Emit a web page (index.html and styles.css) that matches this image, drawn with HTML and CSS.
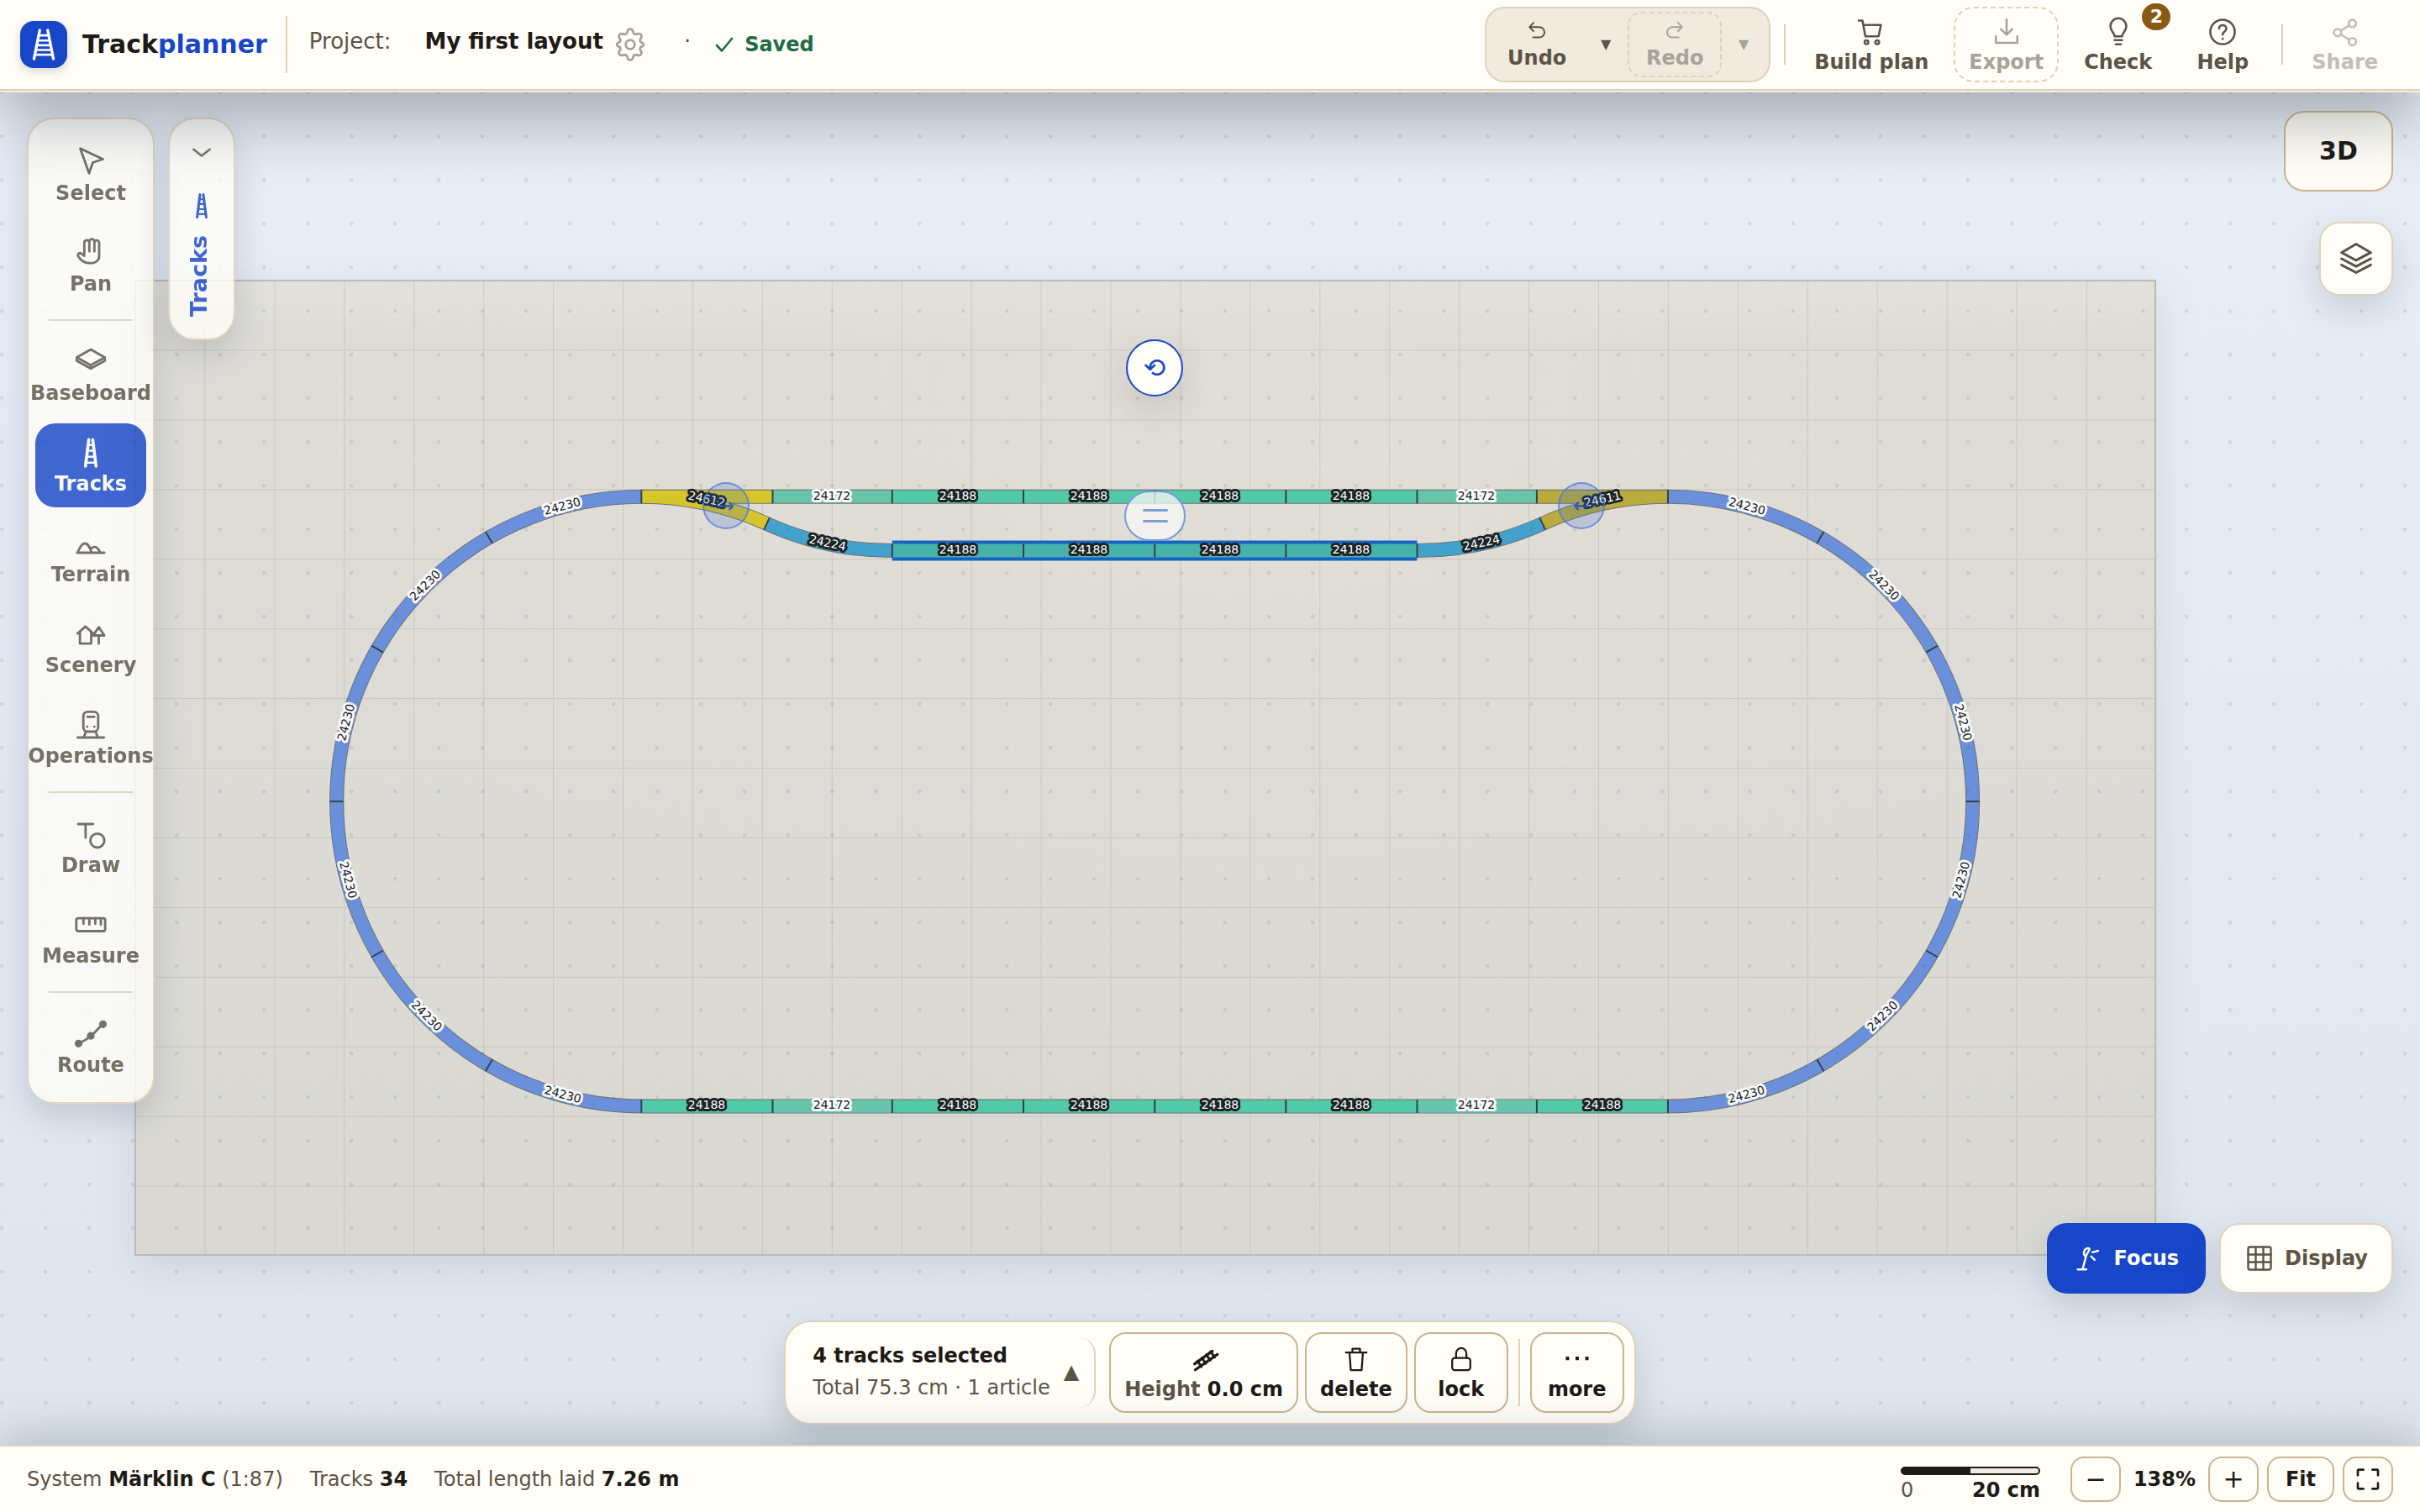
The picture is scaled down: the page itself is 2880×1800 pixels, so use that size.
FILE: index.html
```html
<!DOCTYPE html>
<html lang="en">
<head>
<meta charset="utf-8">
<title>Trackplanner – My first layout</title>
<link rel="stylesheet" href="styles.css">
</head>
<body>
<svg class="sprite" aria-hidden="true">
  <symbol id="i-ladder" viewBox="0 0 24 24"><path d="M10.600 2.600 8.200 21.600M13.400 2.600l2.400 19" stroke-width="2.200"/><path d="M10 6.500h4M9.600 10.500h4.800M9 14.800h6M8.500 19h7" stroke-width="1.500"/></symbol>
  <symbol id="i-logo" viewBox="0 0 24 24"><path d="M9.300 2.200 5.400 21.800M14.700 2.200l3.900 19.600" stroke-width="1.900"/><path d="M8.500 5.800h7M7.900 9.300h8.200M7.300 12.500h9.400M6.800 15.700h10.400M6.200 18.900h11.600" stroke-width="1.500"/></symbol>
</svg>

<header class="topbar">
  <a class="brand" href="#">
    <span class="brand-mark"><svg class="icon brand-icon"><use href="#i-logo"/></svg></span>
    <span>Track<b>planner</b></span>
  </a>
  <span class="brand-rule"></span>
  <div class="project">
    <span class="project-label">Project:</span>
    <span class="project-name">My first layout</span>
    <button class="plain gear" aria-label="Project settings"><svg class="icon" width="44" height="44" viewBox="0 0 24 24" stroke-width="1.500"><path d="M10.300 3.200c.5-1.600 2.900-1.600 3.400 0 .3 2 1.600 2.700 3.200 1.900 1.700-.7 3 1.100 2.200 2.500-1.100 1.500-1 2.600.5 3.100 1.500.8 1.500 1.800 0 2.600-1.500.5-1.600 1.600-.5 3.100.8 1.400-.5 3.200-2.200 2.500-1.600-.8-2.900-.1-3.200 1.900-.5 1.600-2.900 1.600-3.400 0-.3-2-1.600-2.700-3.200-1.900-1.700.7-3-1.100-2.200-2.500 1.100-1.500 1-2.600-.5-3.100-1.500-.8-1.500-1.800 0-2.600 1.500-.5 1.600-1.600.5-3.100-.8-1.400.5-3.200 2.200-2.500 1.600.8 2.900.1 3.200-1.900z"/><circle cx="12" cy="12" r="2.900"/></svg></button>
    <span class="dot-sep">·</span>
    <span class="saved"><svg class="icon" width="24" height="24" viewBox="0 0 24 24" stroke-width="2.600"><path d="m3 13 6 6.500L21 5"/></svg>Saved</span>
  </div>

  <div class="actions">
    <div class="history">
      <button class="tool small"><svg class="icon" width="28" height="28" viewBox="0 0 24 24" stroke-width="1.900"><path d="M8.500 3.500 4.500 8l4 4M4.500 8h10a5 5 0 0 1 0 10.500H8"/></svg>Undo</button>
      <button class="plain caret" aria-label="Undo steps">▼</button>
      <button class="tool small off dashed" disabled><svg class="icon" width="28" height="28" viewBox="0 0 24 24" stroke-width="1.900"><path d="m15.500 3.500 4 4.500-4 4M19.500 8h-10a5 5 0 0 0 0 10.500H16"/></svg>Redo</button>
      <button class="plain caret off" aria-label="Redo steps" disabled>▼</button>
    </div>
    <span class="rule"></span>
    <button class="tool"><svg class="icon" viewBox="0 0 24 24"><path d="M2 3h3l2.300 12.500h10.400l2-9H5.700"/><circle cx="8.200" cy="20.200" r="1.500"/><circle cx="16.700" cy="20.200" r="1.500"/></svg>Build plan</button>
    <button class="tool off dashed" disabled><svg class="icon" viewBox="0 0 24 24"><path d="M12 2v12M7.500 9.700 12 14.200l4.500-4.500M3.500 15.500v5.200h17v-5.200"/></svg>Export</button>
    <button class="tool"><svg class="icon" viewBox="0 0 24 24"><path d="M9 15.500c0-2.600-3.300-4-3.300-8a6.300 6.300 0 0 1 12.600 0c0 4-3.300 5.400-3.300 8zM9 18.500h6M10 21.800h4"/></svg>Check<span class="badge">2</span></button>
    <button class="tool"><svg class="icon" viewBox="0 0 24 24"><circle cx="12" cy="12" r="9.700"/><path d="M9.200 9.300c0-3.600 5.800-3.500 5.800 0 0 2.200-2.900 2.500-2.900 4.900M12.100 17.300v.3"/></svg>Help</button>
    <span class="rule"></span>
    <button class="tool faint" disabled><svg class="icon" viewBox="0 0 24 24"><circle cx="17.700" cy="5.300" r="2.900"/><circle cx="6" cy="12.500" r="2.900"/><circle cx="17.700" cy="19.700" r="2.900"/><path d="m8.500 11 6.700-4.200M8.500 14l6.700 4.200"/></svg>Share</button>
  </div>
</header>

<main class="stage">
  <div class="canvas">
    <svg class="plan" width="100%" height="100%">
      <defs>
        <linearGradient id="wood" x1="0" y1="0" x2="0" y2="1"><stop offset="0" stop-color="#e3e2da"/><stop offset=".05" stop-color="#dedcd7"/><stop offset=".5" stop-color="#dddbd6"/><stop offset="1" stop-color="#d9d8d2"/></linearGradient>
        <radialGradient id="glow" cx=".55" cy=".2" r=".5"><stop offset="0" stop-color="#e4dfd6" stop-opacity=".5"/><stop offset="1" stop-color="#e4dfd6" stop-opacity="0"/></radialGradient>
        <pattern id="grid" x="160.500" y="333.500" width="82.930" height="82.930" patternUnits="userSpaceOnUse"><path d="M0 .5h82.930M.5 0v82.930" stroke="#403c30" stroke-opacity=".13" fill="none"/></pattern>
        <path id="joint-top" d="M763.300 583.300v16"/>
        <path id="joint-right" d="M1985 583.300v16"/>
        <path id="joint" d="M0-8V8"/>
      </defs>
      <g transform="translate(0 -108)">
        <rect class="board" x="161" y="334" width="2404" height="1160" fill="url(#wood)"/>
        <rect x="161" y="334" width="2404" height="1160" fill="url(#glow)"/>
        <rect x="161" y="334" width="2404" height="1160" fill="url(#grid)" stroke="#bdbbb1" stroke-width="2"/>

        <g class="edge">
          <path d="M763.300 591.300A362.800 362.800 0 0 0 763.300 1316.900H1985A362.800 362.800 0 0 0 1985 591.300H763.300"/>
          <path d="M763.300 591.300A362.800 362.800 0 0 1 912.600 623.400A362.800 362.800 0 0 0 1061.800 655.600H1686.500A362.800 362.800 0 0 0 1835.700 623.400A362.800 362.800 0 0 1 1985 591.300"/>
        </g>
        <g class="bed">
          <path class="t-curve" d="M763.300 591.300A362.800 362.800 0 0 0 763.300 1316.900"/>
          <path class="t-curve" d="M1985 591.300A362.800 362.800 0 0 1 1985 1316.900"/>
          <path class="t-188" d="M763.300 1316.900H1985M1061.800 591.300H1686.500"/>
          <path class="t-172" d="M919.500 1316.900H1061.800M1686.500 1316.900H1828.900M919.500 591.300H1061.800M1686.500 591.300H1828.900"/>
          <path class="t-left" d="M763.300 591.300H919.500M763.300 591.300A362.800 362.800 0 0 1 912.600 623.400"/>
          <path class="t-right" d="M1985 591.300H1828.900M1985 591.300A362.800 362.800 0 0 0 1835.700 623.400"/>
          <path class="t-224" d="M912.600 623.400A362.800 362.800 0 0 0 1061.800 655.600M1686.500 655.600A362.800 362.800 0 0 0 1835.700 623.400"/>
          <path class="t-halo" d="M1061.800 655.600H1686.500"/>
          <path class="t-sel" d="M1061.800 655.600H1686.500"/>
        </g>
        <g class="joints">
          <use href="#joint-top"/><use href="#joint-top" transform="rotate(-30 763.300 954.100)"/><use href="#joint-top" transform="rotate(-60 763.300 954.100)"/><use href="#joint-top" transform="rotate(-90 763.300 954.100)"/><use href="#joint-top" transform="rotate(-120 763.300 954.100)"/><use href="#joint-top" transform="rotate(-150 763.300 954.100)"/><use href="#joint-top" transform="rotate(-180 763.300 954.100)"/>
          <use href="#joint-right"/><use href="#joint-right" transform="rotate(30 1985 954.100)"/><use href="#joint-right" transform="rotate(60 1985 954.100)"/><use href="#joint-right" transform="rotate(90 1985 954.100)"/><use href="#joint-right" transform="rotate(120 1985 954.100)"/><use href="#joint-right" transform="rotate(150 1985 954.100)"/><use href="#joint-right" transform="rotate(180 1985 954.100)"/>
          <path d="M919.500 583.300v16M1061.800 583.300v16M1218 583.300v16M1374.200 583.300v16M1530.300 583.300v16M1686.500 583.300v16M1828.900 583.300v16"/>
          <path d="M919.500 1308.900v16M1061.800 1308.900v16M1218 1308.900v16M1374.200 1308.900v16M1530.300 1308.900v16M1686.500 1308.900v16M1828.900 1308.900v16"/>
          <path d="M1061.800 647.600v16M1218 647.600v16M1374.200 647.600v16M1530.300 647.600v16M1686.500 647.600v16"/>
          <use href="#joint" transform="translate(912.600 623.400) rotate(24.300)"/><use href="#joint" transform="translate(1835.700 623.400) rotate(-24.300)"/>
        </g>

        <g class="label">
          <text x="763.300" y="595" transform="rotate(-15 763.300 954.100)">24230</text>
          <text x="763.300" y="595" transform="rotate(-45 763.300 954.100)">24230</text>
          <text x="763.300" y="595" transform="rotate(-75 763.300 954.100)">24230</text>
          <text x="763.300" y="1320" transform="rotate(75 763.300 954.100)">24230</text>
          <text x="763.300" y="1320" transform="rotate(45 763.300 954.100)">24230</text>
          <text x="763.300" y="1320" transform="rotate(15 763.300 954.100)">24230</text>
          <text x="1985" y="595" transform="rotate(15 1985 954.100)">24230</text>
          <text x="1985" y="595" transform="rotate(45 1985 954.100)">24230</text>
          <text x="1985" y="595" transform="rotate(75 1985 954.100)">24230</text>
          <text x="1985" y="1320" transform="rotate(-75 1985 954.100)">24230</text>
          <text x="1985" y="1320" transform="rotate(-45 1985 954.100)">24230</text>
          <text x="1985" y="1320" transform="rotate(-15 1985 954.100)">24230</text>
          <text x="990" y="595">24172</text><text x="1757" y="595">24172</text>
          <text x="990" y="1320">24172</text><text x="1757" y="1320">24172</text>
        </g>
        <g class="label dark">
          <text x="1140" y="595">24188</text><text x="1296" y="595">24188</text><text x="1452" y="595">24188</text><text x="1608" y="595">24188</text>
          <text x="1140" y="659">24188</text><text x="1296" y="659">24188</text><text x="1452" y="659">24188</text><text x="1608" y="659">24188</text>
          <text x="841" y="1320">24188</text><text x="1140" y="1320">24188</text><text x="1296" y="1320">24188</text><text x="1452" y="1320">24188</text><text x="1608" y="1320">24188</text><text x="1907" y="1320">24188</text>
          <text y="5" transform="translate(841 594) rotate(12)">24612</text>
          <text y="5" transform="translate(1907 594) rotate(-12)">24611</text>
          <text y="5" transform="translate(985 646) rotate(12)">24224</text>
          <text y="5" transform="translate(1763 646) rotate(-12)">24224</text>
        </g>
      </g>
    </svg>
    <div class="dots"></div>
    <button class="node port port-left" aria-label="Turnout 24612">→</button>
    <button class="node port port-right" aria-label="Turnout 24611">←</button>
    <button class="node grip" aria-label="Move selection"><i></i><i></i></button>
    <button class="node spin" aria-label="Rotate selection">⟲</button>
  </div>

  <div class="overlay">
    <div class="side left">
      <nav class="panel tools" aria-label="Tools">
        <button><svg class="icon" viewBox="0 0 24 24"><path d="M4.500 2.300 20.700 9.900l-7.200 2.400L10.800 20z"/></svg>Select</button>
        <button><svg class="icon" viewBox="0 0 24 24"><path d="M7.400 12.800V4.700a1.800 1.800 0 0 1 3.600 0V11M11 4.500V4a1.800 1.800 0 0 1 3.600 0v7M14.600 4.800a1.700 1.700 0 0 1 3.400 0v9.400c0 3.200-2.600 5.200-6 5.200-4.200 0-7-1.700-8.900-4.900-.9-1.700.9-3 2.300-1.900l2 1.600"/></svg>Pan</button>
        <hr>
        <button><svg class="icon" viewBox="0 0 24 24"><path d="M12 3 22 8.700 12 14.200 2 8.700zM2 8.700v2.400l10 5.500 10-5.500V8.700M12 14.200v2.400"/></svg>Baseboard</button>
        <button class="on"><svg class="icon"><use href="#i-ladder"/></svg>Tracks</button>
        <button><svg class="icon" viewBox="0 0 24 24"><path d="M2.300 18.600h19.400M2.500 18.600C4.500 14.500 5.500 12 7.800 12s3.400 2.600 4.700 5.900M11.700 16c1-1 2-1.600 3.200-1.500 1.900 0 2.700 2 4 4.100"/></svg>Terrain</button>
        <button><svg class="icon" viewBox="0 0 24 24"><path d="M2.600 11.500 8.200 6.500l5.600 5M4.300 10.500v8.200h8v-8.200M17.700 7l-4 5.900h8zM17.700 13v5.700"/></svg>Scenery</button>
        <button><svg class="icon" viewBox="0 0 24 24"><rect x="6.700" y="2.600" width="10.600" height="14.200" rx="3"/><path d="M9.500 6.200h5M9.400 13.300h.1M14.500 13.300h.1M8.500 17 7 20.800M15.500 17l1.500 3.800M2.600 21h18.800"/></svg>Operations</button>
        <hr>
        <button><svg class="icon" viewBox="0 0 24 24"><path d="M3 4.800h10.600M8.300 4.800v9.700"/><circle cx="16.700" cy="16.600" r="5"/></svg>Draw</button>
        <button><svg class="icon" viewBox="0 0 24 24"><rect x="1.700" y="7.300" width="20.600" height="9.200" rx="1.500"/><path d="M6.800 7.300v4M11 7.300v4.500M15.200 7.300v4M19.200 7.300v4.500"/></svg>Measure</button>
        <hr>
        <button><svg class="icon" viewBox="0 0 24 24"><path d="M3.200 18.800c3.500-1.500 6-3 8.800-5.300 3.500-2.800 5-5.500 8.500-8.500"/><g fill="currentColor"><circle cx="3.300" cy="18.800" r="1.900"/><circle cx="12" cy="13.300" r="1.900"/><circle cx="20.700" cy="5" r="1.900"/></g></svg>Route</button>
      </nav>
      <button class="panel drawer"><svg class="icon" width="36" height="36" viewBox="0 0 24 24"><path d="m5.500 9.200 6.500 5.200 6.500-5.200"/></svg><svg class="icon blue" width="34" height="34"><use href="#i-ladder"/></svg><span>Tracks</span></button>
    </div>

    <div class="selection">
      <button class="summary"><span class="summary-text"><strong>4 tracks selected</strong><span>Total 75.3 cm · 1 article</span></span><span class="up">▲</span></button>
      <button class="act"><svg class="icon" viewBox="0 0 24 24"><path d="M5 20.500 22.500 8.300M4.500 15.800l14-10.200" stroke-width="2.200"/><path d="m6.800 13.500 3 4.500M10.300 11l3 4.500M13.800 8.500l3 4.500M17.300 6l3 4.500" stroke-width="2"/></svg><span><em>Height</em> 0.0 cm</span></button>
      <button class="act"><svg class="icon" viewBox="0 0 24 24"><path d="M3.800 6.800h16.400M9 6.500V3.700h6v2.800M6.700 7l1 13.800h8.600l1-13.800"/></svg>delete</button>
      <button class="act"><svg class="icon" viewBox="0 0 24 24"><rect x="4.800" y="11" width="14.400" height="9.800" rx="2.200"/><path d="M7.900 11V7.400a4.100 4.100 0 0 1 8.200 0V11"/></svg>lock</button>
      <span class="rule tall"></span>
      <button class="act"><svg class="icon" viewBox="0 0 24 24"><path d="M3 10h2.600v2.800H3zM10.700 10h2.600v2.800h-2.600zM18.400 10H21v2.800h-2.600z" fill="currentColor" stroke="none"/></svg>more</button>
    </div>

    <div class="side right">
      <button class="card view3d">3D</button>
      <button class="card layers" aria-label="Layers"><svg class="icon" width="44" height="44" viewBox="0 0 24 24" stroke-width="1.700"><path d="M12 2.500 21.500 8 12 13 2.500 8zM2.500 12l9.500 5 9.500-5M2.500 16l9.500 5 9.500-5"/></svg></button>
      <div class="modes">
        <button class="card focus"><svg class="icon" viewBox="0 0 24 24"><path d="M3 20.800h7M7 20.500l2.600-9.700M9.300 10.700C6.800 8.500 8.200 4.200 11.300 4c2.800.2-.2 2.600-1.900 6.700M14.700 7.200l4.600-1.200M13.800 10.500l2.700 2.700"/></svg>Focus</button>
        <button class="card"><svg class="icon" viewBox="0 0 24 24"><rect x="3" y="3" width="18" height="18" rx="1.500"/><path d="M9 3v18M15 3v18M3 9h18M3 15h18"/></svg>Display</button>
      </div>
    </div>
  </div>
</main>

<footer class="status">
  <span>System <b>Märklin C</b> (1:87)</span>
  <span>Tracks <b>34</b></span>
  <span>Total length laid <b>7.26 m</b></span>
  <div class="zoom">
    <div class="scale"><div class="scale-bar"></div><div class="scale-text"><span>0</span><b>20 cm</b></div></div>
    <button class="key sign" aria-label="Zoom out">−</button>
    <b class="percent">138%</b>
    <button class="key sign" aria-label="Zoom in">+</button>
    <button class="key fit">Fit</button>
    <button class="key" aria-label="Full screen"><svg class="icon" width="32" height="32" viewBox="0 0 24 24" stroke-width="2"><path d="M3 8.500V4.500a1 1 0 0 1 1-1h4M16 3.500h4a1 1 0 0 1 1 1v4M21 15.500v4a1 1 0 0 1-1 1h-4M8 20.500H4a1 1 0 0 1-1-1v-4"/></svg></button>
  </div>
</footer>
</body>
</html>
```
FILE: styles.css
```css
:root {
  --paper: #fffdf7;
  --ink: #1d1b16;
  --soft: #5b5446;
  --line: #e0d2b8;
  --line-strong: #c9b58f;
  --blue: #1746c8;
  --radius: 24px;
}

* { box-sizing: border-box; }

body {
  margin: 0;
  height: 100vh;
  display: flex;
  flex-direction: column;
  overflow: hidden;
  font: 24px/28px "DejaVu Sans", Verdana, sans-serif;
  color: var(--soft);
  background: var(--paper);
}

button {
  font: inherit;
  font-weight: 700;
  color: inherit;
  padding: 0;
  border: 0;
  background: none;
}

.sprite { position: absolute; width: 0; height: 0; }

.icon {
  display: block;
  flex: none;
  fill: none;
  stroke: currentColor;
  stroke-linecap: round;
  stroke-linejoin: round;
}

/* Top bar */
.topbar {
  position: relative;
  z-index: 2;
  height: 108px;
  flex: none;
  display: flex;
  align-items: center;
  padding: 0 32px 0 24px;
  background: var(--paper);
  border-bottom: 2px solid var(--line);
  box-shadow: 0 2px 0 #f5efe2, 0 36px 72px rgba(50, 60, 70, .36);
}

.brand {
  display: flex;
  align-items: center;
  gap: 18px;
  font-size: 30px;
  font-weight: 700;
  color: var(--ink);
  text-decoration: none;
}
.brand b { color: var(--blue); }
.brand-mark {
  width: 56px;
  height: 56px;
  display: grid;
  place-items: center;
  border-radius: 16px;
  color: #fff;
  background: var(--blue);
  box-shadow: 0 4px 12px rgba(50, 60, 70, .2);
}
.brand-icon { width: 42px; height: 42px; }
.brand-rule { width: 2px; height: 68px; margin: 0 26px 0 22px; background: var(--line); }

.project { display: flex; align-items: center; font-size: 26px; padding-bottom: 8px; }
.project-name { margin-left: 40px; font-weight: 700; color: var(--ink); }
.gear { margin: 8px 0 0 10px; color: #a5a198; }
.dot-sep { margin-left: 42px; }
.saved {
  display: flex;
  align-items: center;
  gap: 12px;
  margin: 8px 0 0 28px;
  font-size: 24px;
  font-weight: 700;
  color: #1f6b45;
}

.actions { margin-left: auto; display: flex; align-items: center; gap: 12px; }
.history {
  display: flex;
  align-items: center;
  height: 90px;
  padding: 4px;
  border: 2px solid var(--line);
  border-radius: var(--radius);
  background: #f3eadf;
}
.rule { width: 2px; height: 48px; margin: 0 4px; background: var(--line); }

.tool {
  position: relative;
  display: flex;
  flex-direction: column;
  align-items: center;
  justify-content: center;
  gap: 4px;
  height: 90px;
  min-width: 108px;
  padding: 2px 16px 0;
  border: 2px solid transparent;
  border-radius: var(--radius);
}
.tool .icon { width: 36px; height: 36px; stroke-width: 1.7px; }
.tool.small { width: 112px; height: 78px; padding: 0; border-radius: 16px; }
.tool.small .icon { width: 28px; height: 28px; }
.caret { width: 52px; font-size: 16px; }
.dashed { border: 2px dashed #e0d2b2; }
.off { color: #a8a398; }
.faint { color: #c2beb5; }
.badge {
  position: absolute;
  right: -6px;
  top: -6px;
  width: 34px;
  height: 32px;
  border-radius: 17px;
  font-size: 22px;
  line-height: 32px;
  color: #fff;
  background: #8a5a14;
}

/* Plan canvas */
.stage {
  position: relative;
  flex: 1;
  min-height: 0;
  background: linear-gradient(#e8edf6, #e3e8f2 70%, #dfe6ee);
}
.canvas, .plan, .dots { position: absolute; inset: 0; }
.canvas { overflow: hidden; }
.dots {
  background: radial-gradient(circle at 2px 2px, rgba(70, 80, 90, .12) 2px, transparent 3px) 0 0 / 52px 52px;
  pointer-events: none;
}
.board { filter: drop-shadow(0 16px 24px rgba(60, 70, 80, .12)); }

.edge { fill: none; stroke: #6d7370; stroke-width: 17px; }
.bed { fill: none; stroke-width: 15px; }
.t-curve { stroke: #6a8fdb; }
.t-188 { stroke: #52c9a8; }
.t-172 { stroke: #68c5ac; }
.t-left { stroke: #d6c62a; }
.t-right { stroke: #b9ab3c; }
.t-224 { stroke: #42a2cb; }
.t-halo { stroke: #1763c4; stroke-width: 24px; }
.t-sel { stroke: #46b3aa; stroke-width: 16px; }
.joints { stroke: #33414a; stroke-width: 2px; }

.label {
  font-size: 14px;
  text-anchor: middle;
  fill: #16181a;
  stroke: #f8f9fa;
  stroke-width: 6px;
  stroke-linejoin: round;
  paint-order: stroke;
}
.label.dark { fill: #fff; stroke: #1c2426; }

.node {
  position: absolute;
  display: grid;
  place-content: center;
  border-radius: 34px;
  font-weight: 400;
}
.port {
  top: 466px;
  width: 56px;
  height: 56px;
  font-size: 24px;
  font-weight: 700;
  color: rgba(23, 70, 200, .75);
  border: 2px solid rgba(70, 120, 225, .7);
  background: rgba(70, 110, 200, .22);
}
.port-left { left: 836px; }
.port-right { left: 1854px; }
.grip {
  left: 1338px;
  top: 476px;
  width: 73px;
  height: 60px;
  gap: 10px;
  border: 2px solid #749ae0;
  background: rgba(250, 248, 245, .75);
}
.grip i { width: 30px; height: 3px; border-radius: 2px; background: #7d9fd6; }
.spin {
  left: 1340px;
  top: 296px;
  width: 68px;
  height: 68px;
  font-size: 32px;
  color: var(--blue);
  border: 2px solid var(--blue);
  background: var(--paper);
  box-shadow: 0 16px 40px rgba(60, 70, 80, .15);
}

/* Floating controls */
.overlay {
  position: relative;
  height: 100%;
  display: grid;
  grid-template-columns: 1fr auto 1fr;
  padding: 24px 32px;
  pointer-events: none;
}
.overlay button { pointer-events: auto; }
.side.left { display: flex; align-items: flex-start; gap: 16px; padding-top: 8px; }
.side.right { display: flex; flex-direction: column; align-items: flex-end; }

.panel {
  border: 2px solid var(--line);
  border-radius: 32px;
  background: #fffef9;
  opacity: .8;
  box-shadow: 0 16px 40px rgba(50, 70, 90, .25);
}
.tools {
  width: 152px;
  display: flex;
  flex-direction: column;
  align-items: center;
  gap: 8px;
  padding: 16px 8px;
}
.tools button {
  width: 132px;
  height: 100px;
  flex: none;
  display: flex;
  flex-direction: column;
  align-items: center;
  justify-content: center;
  gap: 3px;
  border-radius: var(--radius);
}
.tools .icon { width: 40px; height: 40px; stroke-width: 1.7px; }
.tools .on { color: #fff; background: var(--blue); }
.tools hr { width: 100px; height: 2px; margin: 6px 0; border: 0; background: var(--line); }

.drawer {
  width: 80px;
  display: flex;
  flex-direction: column;
  align-items: center;
  gap: 18px;
  padding: 22px 0 26px;
  font-size: 27px;
  color: var(--soft);
}
.drawer .icon { stroke-width: 1.7px; margin-bottom: 10px; }
.drawer .blue { margin: 0; }
.drawer .blue, .drawer span { color: var(--blue); }
.drawer span { margin-right: 6px; writing-mode: vertical-rl; transform: rotate(180deg); }

.card {
  height: 84px;
  display: flex;
  align-items: center;
  justify-content: center;
  gap: 12px;
  padding: 0 28px;
  border: 2px solid var(--line);
  border-radius: var(--radius);
  background: var(--paper);
  box-shadow: 0 16px 40px rgba(60, 75, 90, .18);
}
.card .icon { width: 36px; height: 36px; stroke-width: 1.6px; }
.view3d { width: 130px; height: 96px; font-size: 30px; color: var(--ink); border-color: var(--line-strong); box-shadow: none; }
.layers { width: 88px; height: 88px; margin-top: 36px; padding: 0; }
.layers .icon { width: 44px; height: 44px; }
.modes { display: flex; gap: 16px; margin-top: auto; margin-bottom: 156px; }
.focus { padding: 0 30px; color: #fff; border-color: var(--blue); background: var(--blue); }

.selection {
  align-self: end;
  height: 124px;
  display: flex;
  align-items: center;
  gap: 8px;
  padding: 0 12px;
  color: var(--ink);
  border: 2px solid var(--line);
  border-radius: 32px;
  background: var(--paper);
  box-shadow: 0 16px 40px rgba(60, 75, 90, .2);
}
.summary {
  height: 84px;
  display: flex;
  align-items: center;
  gap: 16px;
  padding: 0 18px 2px 20px;
  margin-right: 8px;
  text-align: left;
  border-right: 2px solid var(--line);
  border-radius: 20px;
}
.summary-text { display: flex; flex-direction: column; gap: 10px; color: var(--soft); font-weight: 400; }
.summary-text strong { color: var(--ink); }
.up { color: var(--soft); font-weight: 400; }
.act {
  height: 96px;
  min-width: 112px;
  display: flex;
  flex-direction: column;
  align-items: center;
  justify-content: center;
  gap: 4px;
  padding: 0 16px;
  border: 2px solid var(--line-strong);
  border-radius: 20px;
}
.act .icon { width: 36px; height: 36px; stroke-width: 1.5px; }
.act em { font-style: normal; color: var(--soft); }
.tall { height: 80px; }

/* Status bar */
.status {
  position: relative;
  z-index: 2;
  height: 80px;
  flex: none;
  display: flex;
  align-items: center;
  gap: 32px;
  padding: 0 32px;
  border-top: 2px solid var(--line);
  background: var(--paper);
  box-shadow: 0 -8px 56px rgba(50, 70, 90, .28);
}
.status b { color: var(--ink); }
.zoom { margin-left: auto; display: flex; align-items: center; gap: 10px; }
.scale { width: 166px; margin-right: 26px; padding-top: 12px; }
.scale-bar {
  height: 10px;
  border: 2px solid var(--ink);
  border-radius: 5px;
  background: linear-gradient(90deg, var(--ink) 50%, #f3eadf 50%);
}
.scale-text { display: flex; justify-content: space-between; padding-top: 4px; }
.percent { width: 84px; text-align: center; }
.key {
  width: 60px;
  height: 54px;
  display: grid;
  place-content: center;
  color: var(--ink);
  border: 2px solid var(--line-strong);
  border-radius: 16px;
}
.sign { font-size: 30px; font-weight: 400; }
.fit { width: 80px; }
```
